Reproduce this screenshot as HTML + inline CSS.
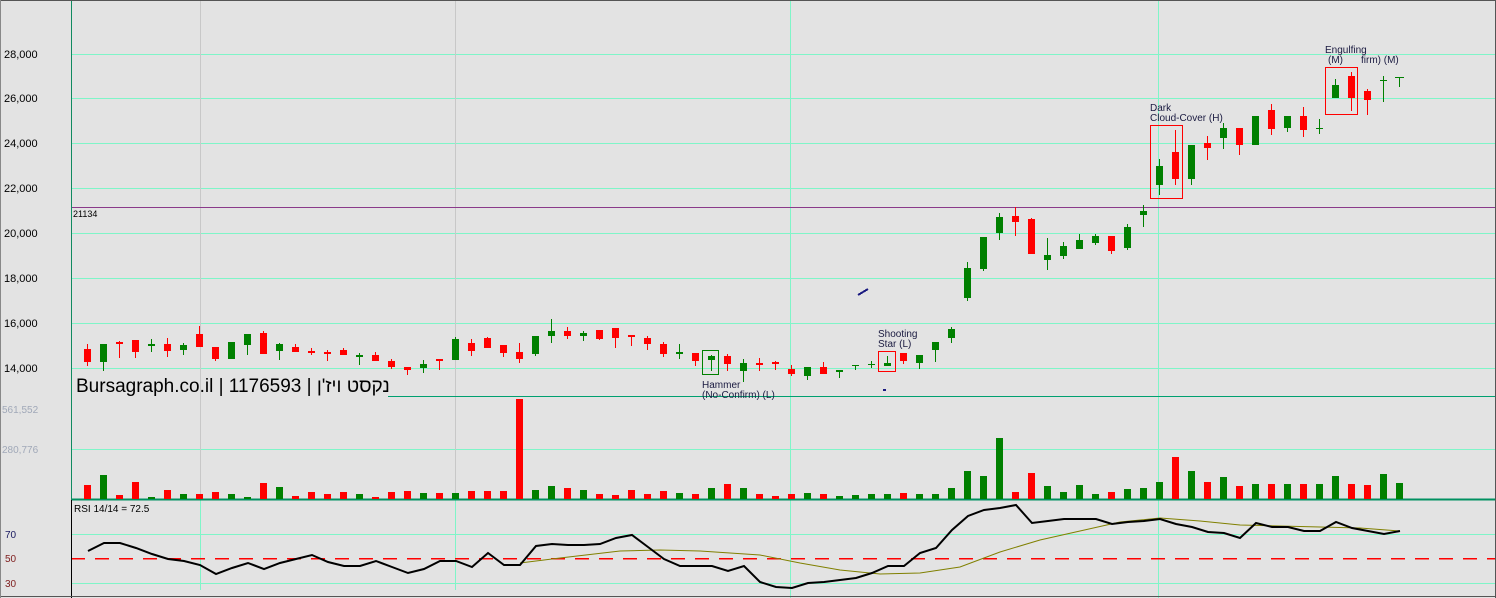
<!DOCTYPE html>
<html><head><meta charset="utf-8"><style>
html,body{margin:0;padding:0;background:#e3e3e3;}
svg{display:block;}
text{font-family:"Liberation Sans","Noto Sans CJK JP",sans-serif;}
</style></head><body>
<svg width="1496" height="598" viewBox="0 0 1496 598" xmlns="http://www.w3.org/2000/svg" shape-rendering="crispEdges">
<rect x="0" y="0" width="1496" height="598" fill="#e3e3e3"/>
<!-- grid -->
<g stroke="#7ff5c8" stroke-width="1">
<path d="M71 54.5H1496M71 98.5H1496M71 143.5H1496M71 188.5H1496M71 233.5H1496M71 278.5H1496M71 323.5H1496M71 368.5H1496M71 449.5H1496M71 534.5H1496M71 583.5H1496"/>
<path d="M790.5 0V598M1158.5 0V598"/>
</g>
<g stroke="#c8c8c8" stroke-width="1"><path d="M200.5 0V500M455.5 0V500"/></g>
<g stroke="#7ff5c8" stroke-width="1"><path d="M200.5 500V590M455.5 500V590"/></g>
<path d="M71 207.5H1496" stroke="#8a3a8a" stroke-width="1"/>
<path d="M71 558.5H1496" stroke="#ff0000" stroke-width="1.5" stroke-dasharray="14,10"/>
<path d="M388 396.5H1496" stroke="#00a070" stroke-width="1"/>
<path d="M71 499.5H1496" stroke="#009060" stroke-width="2"/>
<path d="M71.5 0V500" stroke="#108a60" stroke-width="1"/>
<path d="M71.5 500V598" stroke="#000" stroke-width="1"/>
<path d="M0 0.5H1496M1495.5 0V598M0 596.5H1496" stroke="#555" stroke-width="1"/>
<path d="M0.5 0V598" stroke="#888" stroke-width="1"/>
<!-- axis labels -->
<g font-size="11" fill="#000">
<text x="4" y="58">28,000</text><text x="4" y="102">26,000</text><text x="4" y="147">24,000</text><text x="4" y="192">22,000</text><text x="4" y="237">20,000</text><text x="4" y="282">18,000</text><text x="4" y="327">16,000</text><text x="4" y="372">14,000</text>
</g>
<g font-size="10" fill="#a0a8b8"><text x="2" y="413">561,552</text><text x="2" y="453">280,776</text></g>
<g font-size="10"><text x="5" y="538" fill="#1a1a60">70</text><text x="5" y="562" fill="#802020">50</text><text x="5" y="587" fill="#802020">30</text></g>
<text x="73" y="217" font-size="9" fill="#000">21134</text>
<text x="74" y="512" font-size="10" fill="#000">RSI 14/14 = 72.5</text>
<text x="76" y="392" font-size="19" fill="#000">Bursagraph.co.il | 1176593 | נקסט ויז'ן</text>
<!-- wicks -->
<g stroke="#ff0000" stroke-width="1"><path d="M87.5 344V366M119.5 341V358M135.5 340V358M167.5 338V357M199.5 326V347M215.5 347V361M263.5 331V354M295.5 344V352M311.5 348V355M327.5 350V361M343.5 348V355M375.5 352V361M391.5 359V369M407.5 367V375M439.5 359V370M471.5 339V356M487.5 337V348M503.5 345V357M519.5 343V363M567.5 327V339M599.5 330V340M615.5 328V348M631.5 335V346M647.5 336V350M663.5 342V357M695.5 353V366M727.5 354V371M759.5 358V371M775.5 361V370M791.5 365V376M823.5 362V374M903.5 353V364M1015.5 207V236M1031.5 218V254M1111.5 236V254M1175.5 130V185M1207.5 136V160M1239.5 128V155M1271.5 104V135M1303.5 107V137M1351.5 72V111M1367.5 89V115"/></g>
<g stroke="#008000" stroke-width="1"><path d="M103.5 344V371M151.5 339V352M183.5 343V355M231.5 342V359M247.5 334V355M279.5 343V360M359.5 353V365M423.5 360V373M455.5 337V360M535.5 336V356M551.5 319V343M583.5 331V341M679.5 344V359M711.5 355V371M743.5 359V382M807.5 367V380M839.5 370V378M855.5 365V370M871.5 361V368M887.5 356V366M919.5 355V369M935.5 342V362M951.5 327V343M967.5 262V301M983.5 237V271M999.5 213V240M1047.5 238V270M1063.5 242V259M1079.5 234V249M1095.5 234V245M1127.5 224V250M1143.5 205V227M1159.5 159V195M1191.5 145V185M1223.5 123V149M1255.5 116V145M1287.5 116V132M1319.5 119V134M1335.5 79V98M1383.5 76V102M1399.5 77V87"/></g>
<!-- bodies -->
<g fill="#ff0000">
<rect x="84" y="349" width="7" height="13"/><rect x="116" y="342" width="7" height="2"/><rect x="132" y="340" width="7" height="12"/><rect x="164" y="344" width="7" height="7"/><rect x="196" y="334" width="7" height="13"/><rect x="212" y="347" width="7" height="12"/><rect x="260" y="333" width="7" height="21"/><rect x="292" y="347" width="7" height="5"/><rect x="308" y="351" width="7" height="2"/><rect x="324" y="352" width="7" height="2"/><rect x="340" y="350" width="7" height="5"/><rect x="372" y="355" width="7" height="6"/><rect x="388" y="361" width="7" height="6"/><rect x="404" y="367" width="7" height="3"/><rect x="436" y="359" width="7" height="2"/><rect x="468" y="343" width="7" height="8"/><rect x="484" y="338" width="7" height="10"/><rect x="500" y="345" width="7" height="8"/><rect x="516" y="352" width="7" height="7"/><rect x="564" y="331" width="7" height="5"/><rect x="596" y="330" width="7" height="9"/><rect x="612" y="328" width="7" height="10"/><rect x="628" y="335" width="7" height="2"/><rect x="644" y="338" width="7" height="6"/><rect x="660" y="344" width="7" height="10"/><rect x="692" y="353" width="7" height="8"/><rect x="724" y="356" width="7" height="8"/><rect x="756" y="363" width="7" height="2"/><rect x="772" y="362" width="7" height="2"/><rect x="788" y="369" width="7" height="5"/><rect x="820" y="367" width="7" height="7"/><rect x="900" y="353" width="7" height="8"/><rect x="1012" y="216" width="7" height="6"/><rect x="1028" y="219" width="7" height="35"/><rect x="1108" y="236" width="7" height="15"/><rect x="1172" y="152" width="7" height="27"/><rect x="1204" y="143" width="7" height="5"/><rect x="1236" y="128" width="7" height="17"/><rect x="1268" y="110" width="7" height="19"/><rect x="1300" y="116" width="7" height="14"/><rect x="1348" y="76" width="7" height="22"/><rect x="1364" y="91" width="7" height="9"/>
</g>
<g fill="#008000">
<rect x="100" y="344" width="7" height="18"/><rect x="148" y="344" width="7" height="2"/><rect x="180" y="345" width="7" height="5"/><rect x="228" y="342" width="7" height="17"/><rect x="244" y="334" width="7" height="11"/><rect x="276" y="344" width="7" height="7"/><rect x="356" y="355" width="7" height="2"/><rect x="420" y="364" width="7" height="4"/><rect x="452" y="339" width="7" height="21"/><rect x="532" y="336" width="7" height="18"/><rect x="548" y="331" width="7" height="5"/><rect x="580" y="333" width="7" height="3"/><rect x="676" y="352" width="7" height="2"/><rect x="708" y="356" width="7" height="4"/><rect x="740" y="363" width="7" height="8"/><rect x="804" y="367" width="7" height="9"/><rect x="836" y="370" width="7" height="2"/><rect x="852" y="365" width="7" height="1"/><rect x="868" y="364" width="7" height="1"/><rect x="884" y="363" width="7" height="3"/><rect x="916" y="355" width="7" height="8"/><rect x="932" y="342" width="7" height="8"/><rect x="948" y="329" width="7" height="9"/><rect x="964" y="268" width="7" height="30"/><rect x="980" y="237" width="7" height="32"/><rect x="996" y="217" width="7" height="16"/><rect x="1044" y="255" width="7" height="5"/><rect x="1060" y="246" width="7" height="10"/><rect x="1076" y="240" width="7" height="9"/><rect x="1092" y="236" width="7" height="7"/><rect x="1124" y="227" width="7" height="21"/><rect x="1140" y="211" width="7" height="4"/><rect x="1156" y="166" width="7" height="19"/><rect x="1188" y="145" width="7" height="34"/><rect x="1220" y="128" width="7" height="10"/><rect x="1252" y="116" width="7" height="29"/><rect x="1284" y="116" width="7" height="12"/><rect x="1316" y="128" width="7" height="1"/><rect x="1332" y="85" width="7" height="13"/><rect x="1380" y="80" width="7" height="1"/><rect x="1395" y="77" width="9" height="1"/>
</g>
<!-- pattern boxes -->
<g fill="none" stroke-width="1">
<rect x="702.5" y="350.5" width="16" height="24" stroke="#008000"/>
<rect x="878.5" y="351.5" width="17" height="20" stroke="#ff0000"/>
<rect x="1150.5" y="125.5" width="32" height="73" stroke="#ff0000"/>
<rect x="1325.5" y="67.5" width="32" height="47" stroke="#ff0000"/>
</g>
<path d="M858 295L868 289" stroke="#1a1a80" stroke-width="2"/>
<rect x="883" y="389" width="3" height="2" fill="#1a1a80"/>
<g font-size="10" fill="#1a1a40">
<text x="702" y="388">Hammer</text><text x="702" y="398">(No-Confirm) (L)</text>
<text x="878" y="337">Shooting</text><text x="878" y="347">Star (L)</text>
<text x="1150" y="111">Dark</text><text x="1150" y="121">Cloud-Cover (H)</text>
<text x="1325" y="53">Engulfing</text><text x="1328" y="63">(M)</text><text x="1361" y="63">firm) (M)</text>
</g>
<!-- volume -->
<g fill="#ff0000">
<rect x="84" y="485" width="7" height="14"/><rect x="116" y="495" width="7" height="4"/><rect x="132" y="482" width="7" height="17"/><rect x="164" y="490" width="7" height="9"/><rect x="196" y="494" width="7" height="5"/><rect x="212" y="492" width="7" height="7"/><rect x="260" y="483" width="7" height="16"/><rect x="292" y="496" width="7" height="3"/><rect x="308" y="492" width="7" height="7"/><rect x="324" y="494" width="7" height="5"/><rect x="340" y="492" width="7" height="7"/><rect x="372" y="497" width="7" height="2"/><rect x="388" y="492" width="7" height="7"/><rect x="404" y="491" width="7" height="8"/><rect x="436" y="493" width="7" height="6"/><rect x="468" y="491" width="7" height="8"/><rect x="484" y="491" width="7" height="8"/><rect x="500" y="491" width="7" height="8"/><rect x="516" y="399" width="7" height="100"/><rect x="564" y="488" width="7" height="11"/><rect x="596" y="494" width="7" height="5"/><rect x="612" y="495" width="7" height="4"/><rect x="628" y="490" width="7" height="9"/><rect x="644" y="494" width="7" height="5"/><rect x="660" y="491" width="7" height="8"/><rect x="692" y="494" width="7" height="5"/><rect x="724" y="484" width="7" height="15"/><rect x="756" y="494" width="7" height="5"/><rect x="772" y="496" width="7" height="3"/><rect x="788" y="494" width="7" height="5"/><rect x="820" y="494" width="7" height="5"/><rect x="900" y="493" width="7" height="6"/><rect x="1012" y="492" width="7" height="7"/><rect x="1028" y="473" width="7" height="26"/><rect x="1108" y="492" width="7" height="7"/><rect x="1172" y="457" width="7" height="42"/><rect x="1204" y="482" width="7" height="17"/><rect x="1236" y="486" width="7" height="13"/><rect x="1268" y="484" width="7" height="15"/><rect x="1300" y="484" width="7" height="15"/><rect x="1348" y="484" width="7" height="15"/><rect x="1364" y="485" width="7" height="14"/>
</g>
<g fill="#008000">
<rect x="100" y="475" width="7" height="24"/><rect x="148" y="497" width="7" height="2"/><rect x="180" y="494" width="7" height="5"/><rect x="228" y="494" width="7" height="5"/><rect x="244" y="497" width="7" height="2"/><rect x="276" y="487" width="7" height="12"/><rect x="356" y="494" width="7" height="5"/><rect x="420" y="493" width="7" height="6"/><rect x="452" y="493" width="7" height="6"/><rect x="532" y="490" width="7" height="9"/><rect x="548" y="486" width="7" height="13"/><rect x="580" y="490" width="7" height="9"/><rect x="676" y="493" width="7" height="6"/><rect x="708" y="488" width="7" height="11"/><rect x="740" y="488" width="7" height="11"/><rect x="804" y="493" width="7" height="6"/><rect x="836" y="496" width="7" height="3"/><rect x="852" y="495" width="7" height="4"/><rect x="868" y="494" width="7" height="5"/><rect x="884" y="494" width="7" height="5"/><rect x="916" y="494" width="7" height="5"/><rect x="932" y="494" width="7" height="5"/><rect x="948" y="488" width="7" height="11"/><rect x="964" y="471" width="7" height="28"/><rect x="980" y="476" width="7" height="23"/><rect x="996" y="438" width="7" height="61"/><rect x="1044" y="486" width="7" height="13"/><rect x="1060" y="492" width="7" height="7"/><rect x="1076" y="485" width="7" height="14"/><rect x="1092" y="494" width="7" height="5"/><rect x="1124" y="489" width="7" height="10"/><rect x="1140" y="488" width="7" height="11"/><rect x="1156" y="482" width="7" height="17"/><rect x="1188" y="471" width="7" height="28"/><rect x="1220" y="477" width="7" height="22"/><rect x="1252" y="484" width="7" height="15"/><rect x="1284" y="484" width="7" height="15"/><rect x="1316" y="484" width="7" height="15"/><rect x="1332" y="476" width="7" height="23"/><rect x="1380" y="474" width="7" height="25"/><rect x="1396" y="483" width="7" height="16"/>
</g>
<!-- RSI -->
<g shape-rendering="auto" fill="none">
<polyline stroke="#808000" stroke-width="1" points="520,563 560,558 620,551 660,550 700,551 760,555 800,563 840,570 880,574 920,573 960,567 1000,552 1040,540 1080,531 1120,522 1160,518 1200,521 1240,525 1280,526 1320,527 1360,528 1400,531"/>
<polyline stroke="#000" stroke-width="2" points="88,551 104,543 120,543 136,548 152,554 168,559 184,561 200,565 216,574 232,568 248,563 264,569 280,563 296,559 312,555 328,562 344,566 360,566 376,561 392,567 408,573 424,569 440,561 456,561 472,567 488,553 504,565 520,565 536,546 552,544 568,545 584,545 600,544 616,538 632,535 648,547 664,559 680,566 696,566 712,566 728,571 744,566 760,582 776,587 792,588 808,583 824,582 840,580 856,578 872,573 888,566 904,566 920,553 936,548 952,530 968,516 984,510 1000,508 1016,505 1032,523 1048,521 1064,519 1080,519 1096,519 1112,524 1128,522 1144,521 1160,519 1176,524 1192,527 1208,532 1224,533 1240,538 1256,523 1272,527 1288,527 1304,531 1320,531 1336,522 1352,528 1368,531 1384,534 1400,531"/>
</g>
</svg>
</body></html>
